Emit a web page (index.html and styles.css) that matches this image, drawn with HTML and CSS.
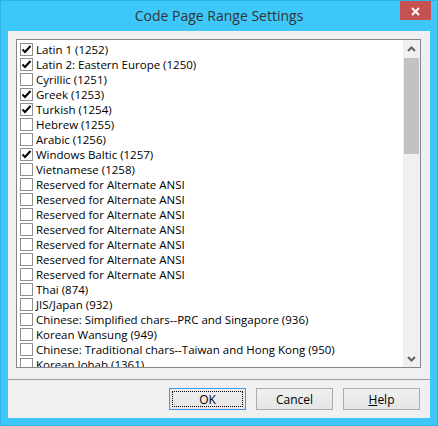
FILE: index.html
```html
<!DOCTYPE html>
<html>
<head>
<meta charset="utf-8">
<link rel="stylesheet" href="styles.css">
</head>
<body>
<div class="window">
  <div class="titlebar">
    <span class="title">Code Page Range Settings</span>
    <div class="close"><svg width="9" height="9" viewBox="0 0 9 9"><path d="M1 1 L8 8 M8 1 L1 8" stroke="#fff" stroke-width="2" fill="none"/></svg></div>
  </div>
  <div class="client">
    <div class="listbox">
      <div class="items">
        <div class="row"><span class="cb on"></span><span class="lbl">Latin 1 (1252)</span></div>
        <div class="row"><span class="cb on"></span><span class="lbl">Latin 2: Eastern Europe (1250)</span></div>
        <div class="row"><span class="cb"></span><span class="lbl">Cyrillic (1251)</span></div>
        <div class="row"><span class="cb on"></span><span class="lbl">Greek (1253)</span></div>
        <div class="row"><span class="cb on"></span><span class="lbl">Turkish (1254)</span></div>
        <div class="row"><span class="cb"></span><span class="lbl">Hebrew (1255)</span></div>
        <div class="row"><span class="cb"></span><span class="lbl">Arabic (1256)</span></div>
        <div class="row"><span class="cb on"></span><span class="lbl">Windows Baltic (1257)</span></div>
        <div class="row"><span class="cb"></span><span class="lbl">Vietnamese (1258)</span></div>
        <div class="row"><span class="cb"></span><span class="lbl">Reserved for Alternate ANSI</span></div>
        <div class="row"><span class="cb"></span><span class="lbl">Reserved for Alternate ANSI</span></div>
        <div class="row"><span class="cb"></span><span class="lbl">Reserved for Alternate ANSI</span></div>
        <div class="row"><span class="cb"></span><span class="lbl">Reserved for Alternate ANSI</span></div>
        <div class="row"><span class="cb"></span><span class="lbl">Reserved for Alternate ANSI</span></div>
        <div class="row"><span class="cb"></span><span class="lbl">Reserved for Alternate ANSI</span></div>
        <div class="row"><span class="cb"></span><span class="lbl">Reserved for Alternate ANSI</span></div>
        <div class="row"><span class="cb"></span><span class="lbl">Thai (874)</span></div>
        <div class="row"><span class="cb"></span><span class="lbl">JIS/Japan (932)</span></div>
        <div class="row"><span class="cb"></span><span class="lbl">Chinese: Simplified chars--PRC and Singapore (936)</span></div>
        <div class="row"><span class="cb"></span><span class="lbl">Korean Wansung (949)</span></div>
        <div class="row"><span class="cb"></span><span class="lbl">Chinese: Traditional chars--Taiwan and Hong Kong (950)</span></div>
        <div class="row"><span class="cb"></span><span class="lbl">Korean Johab (1361)</span></div>
        <div class="row"><span class="cb"></span><span class="lbl">Reserved for Alternate ANSI</span></div>
      </div>
      <div class="scrollbar">
        <div class="arrow"><svg width="9" height="6" viewBox="0 0 9 6"><path d="M1 5 L4.5 1.5 L8 5" stroke="#606060" stroke-width="2" fill="none"/></svg></div>
        <div class="track"><div class="thumb"></div></div>
        <div class="arrow"><svg width="9" height="6" viewBox="0 0 9 6"><path d="M1 1 L4.5 4.5 L8 1" stroke="#606060" stroke-width="2" fill="none"/></svg></div>
      </div>
    </div>
    <div class="footer">
      <button class="btn default"><span class="focus">OK</span></button>
      <button class="btn"><span class="focus-none">Cancel</span></button>
      <button class="btn"><span class="focus-none"><u>H</u>elp</span></button>
    </div>
  </div>
</div>
</body>
</html>
```

FILE: styles.css
```css
html, body {
  margin: 0;
  padding: 0;
  width: 438px;
  height: 426px;
  overflow: hidden;
}

.window {
  box-sizing: border-box;
  width: 438px;
  height: 426px;
  background: #3ec8fa;
  border: 1px solid #2fb2e6;
  display: flex;
  flex-direction: column;
}

.titlebar {
  height: 30px;
  display: grid;
  grid-template-columns: 1fr auto 1fr;
  align-items: start;
}

.title {
  grid-column: 2;
  font-family: "Open Sans", "Noto Sans", sans-serif;
  font-size: 14px;
  color: #333;
  line-height: 30px;
  white-space: nowrap;
}

.close {
  grid-column: 3;
  justify-self: end;
  margin-right: 6px;
  width: 31px;
  height: 19px;
  background: #c75050;
  display: flex;
  align-items: center;
  justify-content: center;
}

.close svg {
  display: block;
  margin-top: 1px;
}

.client {
  flex: 1;
  margin: 0 7px 7px 7px;
  background: #f0f0f0;
  display: flex;
  flex-direction: column;
  padding-top: 8px;
}

.listbox {
  box-sizing: border-box;
  margin-left: 8px;
  width: 405px;
  height: 329px;
  border: 1px solid #828790;
  background: #fff;
  display: flex;
  overflow: hidden;
}

.items {
  flex: 1;
  overflow: hidden;
  padding-top: 2px;
}

.row {
  height: 15px;
  display: flex;
  align-items: center;
  padding-left: 3px;
  font-family: "Open Sans", "Noto Sans", sans-serif;
  font-size: 11.5px;
  color: #000;
  white-space: nowrap;
}

.cb {
  box-sizing: border-box;
  width: 13px;
  height: 13px;
  border: 1px solid #8f8f8f;
  background: #fff;
  flex: none;
  margin-right: 3px;
}

.cb.on {
  background-image: url("data:image/svg+xml;utf8,<svg xmlns='http://www.w3.org/2000/svg' width='11' height='11' viewBox='0 0 11 11'><path d='M1.5 5.5 L4 8 L9.5 2' stroke='black' stroke-width='2' fill='none'/></svg>");
  background-repeat: no-repeat;
  background-position: 0 0;
}

.lbl {
  line-height: 15px;
}

.scrollbar {
  width: 17px;
  flex: none;
  background: #f0f0f0;
  display: flex;
  flex-direction: column;
}

.arrow {
  height: 17px;
  display: flex;
  align-items: center;
  justify-content: center;
  flex: none;
}

.arrow svg {
  display: block;
}

.track {
  flex: 1;
  padding-top: 1px;
}

.thumb {
  margin-left: 1px;
  width: 15px;
  height: 96px;
  background: #c2c2c2;
}

.footer {
  margin-top: 11px;
  border-top: 1px solid #a0a0a0;
  flex: 1;
  display: flex;
  justify-content: flex-end;
  align-items: flex-start;
  gap: 10px;
  padding: 8px 10px 0 0;
}

.btn {
  box-sizing: border-box;
  width: 77px;
  height: 22px;
  border: 1px solid #acacac;
  background: linear-gradient(#f0f0f0, #e5e5e5);
  font-family: "Open Sans", "Noto Sans", sans-serif;
  font-size: 12px;
  color: #000;
  padding: 2px;
  margin: 0;
  display: flex;
}

.btn.default {
  border-color: #3399ff;
}

.btn .focus, .btn .focus-none {
  flex: 1;
  display: flex;
  align-items: center;
  justify-content: center;
  border: 1px dotted transparent;
}

.btn .focus {
  border-color: #000;
}
```
